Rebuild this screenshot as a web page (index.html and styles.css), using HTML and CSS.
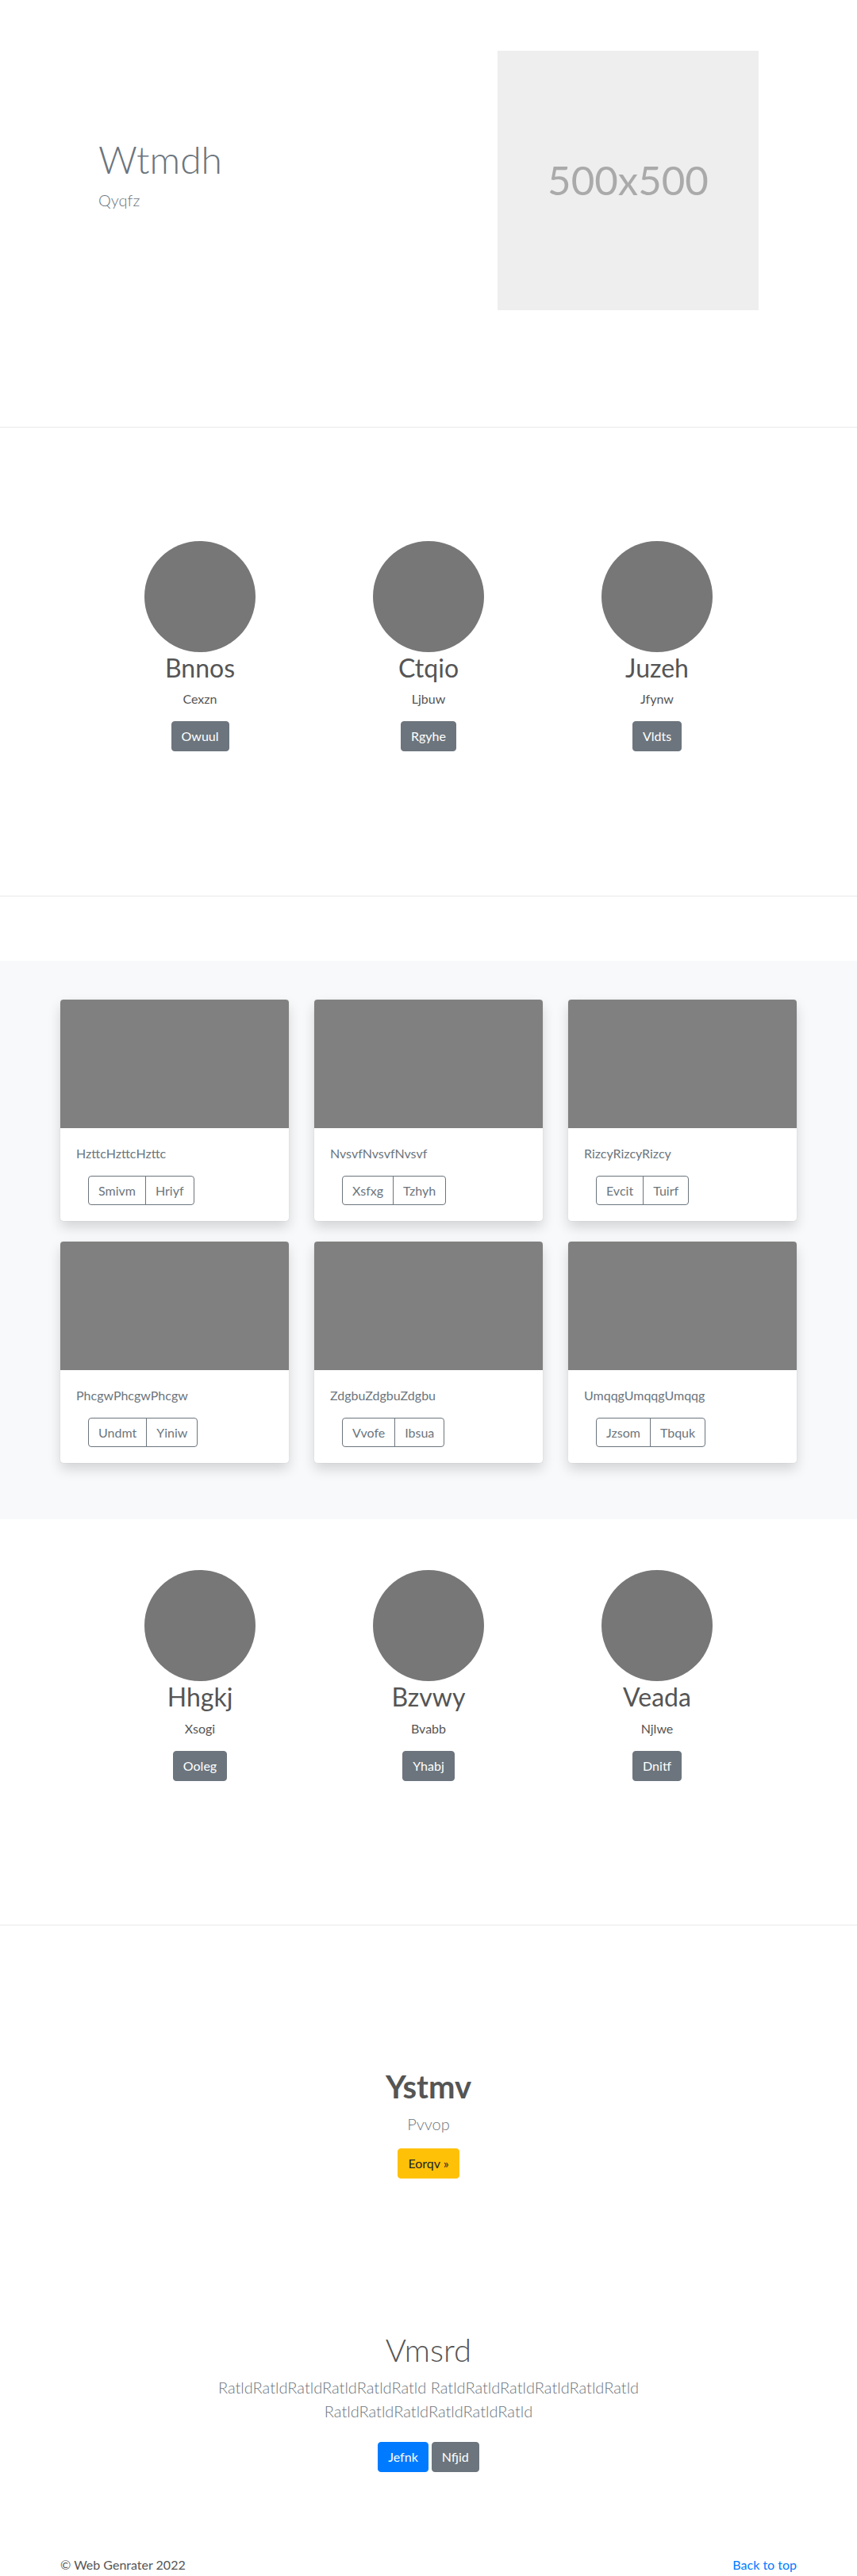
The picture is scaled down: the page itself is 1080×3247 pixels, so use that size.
FILE: index.html
```html
<!DOCTYPE html>
<html lang="en">
<head>
<meta charset="utf-8">
<title>Web Genrater</title>
<link rel="stylesheet" href="styles.css">
</head>
<body>
<section class="hero">
  <div class="container hero-row">
    <div class="hero-text">
      <h1 class="hero-title">Wtmdh</h1>
      <p class="hero-lead">Qyqfz</p>
    </div>
    <div class="hero-media">
      <div class="placeholder">500x500</div>
    </div>
  </div>
</section>

<section class="team team-first">
  <div class="team-grid">
    <div class="member">
      <div class="avatar"></div>
      <h2 class="member-name">Bnnos</h2>
      <p class="member-role">Cexzn</p>
      <a class="btn btn-secondary">Owuul</a>
    </div>
    <div class="member">
      <div class="avatar"></div>
      <h2 class="member-name">Ctqio</h2>
      <p class="member-role">Ljbuw</p>
      <a class="btn btn-secondary">Rgyhe</a>
    </div>
    <div class="member">
      <div class="avatar"></div>
      <h2 class="member-name">Juzeh</h2>
      <p class="member-role">Jfynw</p>
      <a class="btn btn-secondary">Vldts</a>
    </div>
  </div>
</section>

<section class="album">
  <div class="container card-grid">
    <div class="card">
      <div class="card-img"></div>
      <div class="card-body">
        <p class="card-text">HzttcHzttcHzttc</p>
        <div class="btn-group"><a class="btn btn-outline">Smivm</a><a class="btn btn-outline">Hriyf</a></div>
      </div>
    </div>
    <div class="card">
      <div class="card-img"></div>
      <div class="card-body">
        <p class="card-text">NvsvfNvsvfNvsvf</p>
        <div class="btn-group"><a class="btn btn-outline">Xsfxg</a><a class="btn btn-outline">Tzhyh</a></div>
      </div>
    </div>
    <div class="card">
      <div class="card-img"></div>
      <div class="card-body">
        <p class="card-text">RizcyRizcyRizcy</p>
        <div class="btn-group"><a class="btn btn-outline">Evcit</a><a class="btn btn-outline">Tuirf</a></div>
      </div>
    </div>
    <div class="card">
      <div class="card-img"></div>
      <div class="card-body">
        <p class="card-text">PhcgwPhcgwPhcgw</p>
        <div class="btn-group"><a class="btn btn-outline">Undmt</a><a class="btn btn-outline">Yiniw</a></div>
      </div>
    </div>
    <div class="card">
      <div class="card-img"></div>
      <div class="card-body">
        <p class="card-text">ZdgbuZdgbuZdgbu</p>
        <div class="btn-group"><a class="btn btn-outline">Vvofe</a><a class="btn btn-outline">Ibsua</a></div>
      </div>
    </div>
    <div class="card">
      <div class="card-img"></div>
      <div class="card-body">
        <p class="card-text">UmqqgUmqqgUmqqg</p>
        <div class="btn-group"><a class="btn btn-outline">Jzsom</a><a class="btn btn-outline">Tbquk</a></div>
      </div>
    </div>
  </div>
</section>

<section class="team team-second">
  <div class="team-grid">
    <div class="member">
      <div class="avatar"></div>
      <h2 class="member-name">Hhgkj</h2>
      <p class="member-role">Xsogi</p>
      <a class="btn btn-secondary">Ooleg</a>
    </div>
    <div class="member">
      <div class="avatar"></div>
      <h2 class="member-name">Bzvwy</h2>
      <p class="member-role">Bvabb</p>
      <a class="btn btn-secondary">Yhabj</a>
    </div>
    <div class="member">
      <div class="avatar"></div>
      <h2 class="member-name">Veada</h2>
      <p class="member-role">Njlwe</p>
      <a class="btn btn-secondary">Dnitf</a>
    </div>
  </div>
</section>

<section class="cta">
  <h1 class="cta-title">Ystmv</h1>
  <p class="cta-lead">Pvvop</p>
  <a class="btn btn-warning">Eorqv &raquo;</a>
</section>

<section class="intro">
  <h1 class="intro-title">Vmsrd</h1>
  <p class="intro-lead">RatldRatldRatldRatldRatldRatld RatldRatldRatldRatldRatldRatld RatldRatldRatldRatldRatldRatld</p>
  <div class="intro-actions">
    <a class="btn btn-primary">Jefnk</a>
    <a class="btn btn-secondary">Nfjid</a>
  </div>
</section>

<footer class="footer">
  <div class="container footer-row">
    <p class="copyright">&copy; Web Genrater 2022</p>
    <a class="back-top" href="#">Back to top</a>
  </div>
</footer>
</body>
</html>
```

FILE: styles.css
```css
* { box-sizing: border-box; }

html, body {
  margin: 0;
  padding: 0;
}

body {
  font-family: Lato, "Open Sans", "Noto Sans", sans-serif;
  font-size: 16px;
  line-height: 1.5;
  color: #212529;
  background: #fff;
}

h1, h2, p { margin: 0; }

.container {
  width: 928px;
  margin: 0 auto;
}

/* Buttons */
.btn {
  display: inline-block;
  font-size: 16px;
  line-height: 24px;
  padding: 6px 12px;
  border: 1px solid transparent;
  border-radius: 4px;
  text-decoration: none;
  cursor: pointer;
}
.btn-secondary { background: #6c757d; border-color: #6c757d; color: #fff; }
.btn-primary { background: #007bff; border-color: #007bff; color: #fff; }
.btn-warning { background: #ffc107; border-color: #ffc107; color: #212529; }
.btn-outline { background: transparent; border-color: #6c757d; color: #6c757d; }

/* Hero */
.hero {
  padding: 64px 0 147px;
  border-bottom: 1px solid #e9e9e9;
}
.hero-row {
  display: flex;
  align-items: center;
}
.hero-text {
  width: 464px;
  padding-left: 48px;
}
.hero-title {
  font-size: 48px;
  font-weight: 300;
  line-height: 1.2;
  color: #6c757d;
  margin-bottom: 8px;
}
.hero-lead {
  font-size: 20px;
  font-weight: 300;
  line-height: 1.5;
  color: #6c757d;
  margin-bottom: 16px;
}
.hero-media {
  width: 464px;
  padding-left: 87px;
}
.placeholder {
  width: 329px;
  height: 327px;
  background: #eeeeee;
  color: #aaaaaa;
  font-size: 51px;
  display: flex;
  align-items: center;
  justify-content: center;
}

/* Team */
.team {
  border-bottom: 1px solid #e9e9e9;
}
.team-first { padding: 143px 0 182px; }
.team-second { padding: 64px 0 181px; }
.team-grid {
  width: 864px;
  margin: 0 auto;
  display: grid;
  grid-template-columns: repeat(3, 1fr);
}
.member {
  display: flex;
  flex-direction: column;
  align-items: center;
  text-align: center;
}
.avatar {
  width: 140px;
  height: 140px;
  border-radius: 50%;
  background: #777777;
  margin-bottom: 1px;
}
.member-name {
  font-size: 32px;
  font-weight: 400;
  line-height: 1.2;
  color: #555;
  margin-bottom: 8px;
}
.member-role {
  font-size: 16px;
  color: #555;
  margin-bottom: 16px;
}

/* Album */
.album {
  margin-top: 81px;
  background: #f8f9fa;
  padding: 49px 0 71px;
}
.card-grid {
  display: grid;
  grid-template-columns: repeat(3, 288px);
  column-gap: 32px;
  row-gap: 26px;
}
.card {
  background: #fff;
  border-radius: 4px;
  overflow: hidden;
  box-shadow: 0 0 1px rgba(0,0,0,.2), 0 8px 16px rgba(0,0,0,.15);
}
.card-img {
  height: 162px;
  background: #808080;
}
.card-body {
  padding: 20px;
}
.card-text {
  color: #6c757d;
  margin-bottom: 16px;
}
.btn-group {
  display: inline-flex;
  margin-left: 15px;
}
.btn-group .btn {
  line-height: 23px;
}
.btn-group .btn:first-child {
  border-top-right-radius: 0;
  border-bottom-right-radius: 0;
}
.btn-group .btn + .btn {
  margin-left: -1px;
  border-top-left-radius: 0;
  border-bottom-left-radius: 0;
}

/* CTA */
.cta {
  padding-top: 179px;
  text-align: center;
}
.cta-title {
  font-size: 40px;
  font-weight: 700;
  line-height: 1.2;
  color: #555;
  margin-bottom: 8px;
}
.cta-lead {
  font-size: 20px;
  font-weight: 300;
  line-height: 1.5;
  color: #6c757d;
  margin-bottom: 16px;
}

/* Intro */
.intro {
  padding-top: 192px;
  text-align: center;
}
.intro-title {
  font-size: 40px;
  font-weight: 300;
  line-height: 1.2;
  color: #555;
  margin-bottom: 8px;
}
.intro-lead {
  width: 600px;
  margin: 0 auto 24px;
  font-size: 20px;
  font-weight: 300;
  line-height: 1.5;
  color: #6c757d;
}
.intro-actions {
  display: flex;
  justify-content: center;
  gap: 4px;
}

/* Footer */
.footer {
  padding-top: 105px;
}
.footer-row {
  display: flex;
  justify-content: space-between;
  align-items: center;
}
.copyright {
  color: #555;
}
.back-top {
  color: #007bff;
  text-decoration: none;
}
```
